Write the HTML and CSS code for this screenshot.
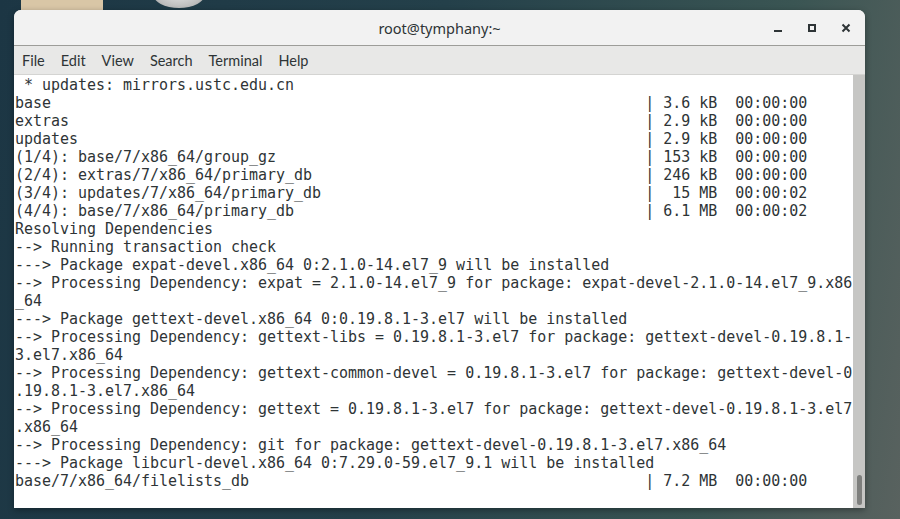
FILE: index.html
```html
<!DOCTYPE html>
<html>
<head>
<meta charset="utf-8">
<link rel="stylesheet" href="styles.css">
</head>
<body>
<div class="desk-icon folder"></div>
<div class="desk-icon disk"></div>
<div class="window">
  <div class="titlebar">
    <div class="title">root@tymphany:~</div>
    <div class="controls">
      <svg class="ctl" width="16" height="16" viewBox="0 0 16 16"><rect x="4" y="10" width="8" height="2" fill="#2e3436"/></svg>
      <svg class="ctl" width="16" height="16" viewBox="0 0 16 16"><rect x="5" y="5" width="6" height="6" fill="none" stroke="#2e3436" stroke-width="2"/></svg>
      <svg class="ctl" width="16" height="16" viewBox="0 0 16 16"><path d="M4.5 4.5 L11.5 11.5 M11.5 4.5 L4.5 11.5" stroke="#2e3436" stroke-width="2"/></svg>
    </div>
  </div>
  <div class="menubar">
    <span>File</span><span>Edit</span><span>View</span><span>Search</span><span>Terminal</span><span>Help</span>
  </div>
  <div class="term">
<pre class="text"> * updates: mirrors.ustc.edu.cn
base                                                                  | 3.6 kB  00:00:00
extras                                                                | 2.9 kB  00:00:00
updates                                                               | 2.9 kB  00:00:00
(1/4): base/7/x86_64/group_gz                                         | 153 kB  00:00:00
(2/4): extras/7/x86_64/primary_db                                     | 246 kB  00:00:00
(3/4): updates/7/x86_64/primary_db                                    |  15 MB  00:00:02
(4/4): base/7/x86_64/primary_db                                       | 6.1 MB  00:00:02
Resolving Dependencies
--> Running transaction check
---> Package expat-devel.x86_64 0:2.1.0-14.el7_9 will be installed
--> Processing Dependency: expat = 2.1.0-14.el7_9 for package: expat-devel-2.1.0-14.el7_9.x86
_64
---> Package gettext-devel.x86_64 0:0.19.8.1-3.el7 will be installed
--> Processing Dependency: gettext-libs = 0.19.8.1-3.el7 for package: gettext-devel-0.19.8.1-
3.el7.x86_64
--> Processing Dependency: gettext-common-devel = 0.19.8.1-3.el7 for package: gettext-devel-0
.19.8.1-3.el7.x86_64
--> Processing Dependency: gettext = 0.19.8.1-3.el7 for package: gettext-devel-0.19.8.1-3.el7
.x86_64
--> Processing Dependency: git for package: gettext-devel-0.19.8.1-3.el7.x86_64
---> Package libcurl-devel.x86_64 0:7.29.0-59.el7_9.1 will be installed
base/7/x86_64/filelists_db                                            | 7.2 MB  00:00:00</pre>
    <div class="scrollbar"><div class="thumb"></div></div>
  </div>
</div>
</body>
</html>
```
FILE: styles.css
```css
html, body {
  margin: 0;
  padding: 0;
}
body {
  width: 900px;
  height: 519px;
  overflow: hidden;
  position: relative;
  background: linear-gradient(100deg, #1c3644 0%, #24404a 45%, #3a5553 80%, #59625f 100%);
  padding-top: 10px;
  padding-left: 14px;
  box-sizing: border-box;
}
.desk-icon {
  position: absolute;
  top: -20px;
}
.desk-icon.folder {
  left: 21px;
  width: 82px;
  height: 30px;
  background: #d9c6a6;
}
.desk-icon.disk {
  left: 153px;
  width: 52px;
  height: 28px;
  border-radius: 50%;
  background: radial-gradient(ellipse at 50% 30%, #f0f0f0, #bcbcbc 70%, #8a8a8a);
}
.window {
  position: relative;
  width: 851px;
  height: 498px;
  display: flex;
  flex-direction: column;
  border-radius: 7px 7px 0 0;
  overflow: hidden;
  box-shadow: 0 2px 6px rgba(0,0,0,0.35);
  background: #fff;
}
.titlebar {
  height: 35px;
  flex: none;
  background: #f2f2f2;
  border-bottom: 1px solid #9d9d99;
  display: flex;
  align-items: center;
  justify-content: center;
  position: relative;
}
.title {
  font-family: "Noto Sans", "DejaVu Sans", sans-serif;
  font-size: 14.5px;
  color: #2e3436;
  padding-top: 1px;
}
.controls {
  position: absolute;
  right: 11px;
  top: 10px;
  display: flex;
  gap: 18px;
}
.ctl {
  display: block;
}
.menubar {
  height: 28px;
  flex: none;
  background: #e8e8e7;
  border-bottom: 1px solid #d4d4d2;
  display: flex;
  align-items: center;
  padding-left: 8px;
  gap: 16px;
  font-family: "Lato", "Noto Sans", sans-serif;
  font-size: 14.5px;
  color: #2e3436;
}
.term {
  flex: 1;
  display: flex;
  background: #fff;
  min-height: 0;
}
.text {
  margin: 0;
  flex: 1;
  padding: 1px 0 0 1px;
  font-family: "DejaVu Sans Mono", monospace;
  font-size: 14.96px;
  line-height: 18px;
  color: #2e3436;
  white-space: pre;
  overflow: hidden;
}
.scrollbar {
  width: 12px;
  flex: none;
  background: #c6c6c4;
  display: flex;
  flex-direction: column;
  justify-content: flex-end;
  align-items: center;
  padding-bottom: 3px;
}
.thumb {
  width: 5px;
  height: 30px;
  border-radius: 3px;
  background: #7e7f7d;
}
```
